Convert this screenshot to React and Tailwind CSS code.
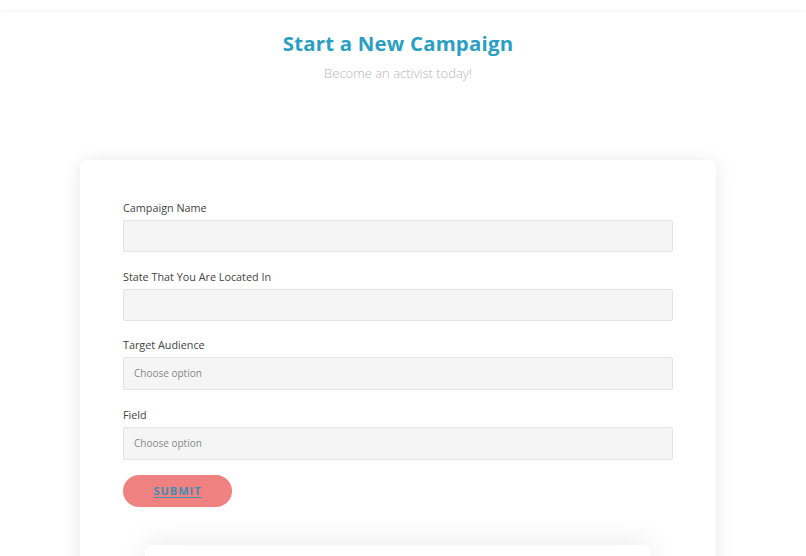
export default function App() {
  const fields = [
    { label: 'Campaign Name', type: 'input' },
    { label: 'State That You Are Located In', type: 'input' },
    { label: 'Target Audience', type: 'select' },
    { label: 'Field', type: 'select' },
  ];

  return (
    <div className="min-h-screen bg-white overflow-hidden pr-[10px] font-['Open_Sans',sans-serif]">
      {/* Top bar */}
      <div className="-mr-[10px] h-[10px] bg-white shadow-[0_1px_4px_rgba(0,0,0,0.05)]" />

      {/* Heading */}
      <div className="text-center pt-[20px]">
        <h1 className="text-[20.4px] font-bold text-[#2a9fc3] tracking-[0.2px] leading-[26px]">
          Start a New Campaign
        </h1>
        <p className="mt-[8px] text-[13px] font-light text-[#b5b5b5] leading-[18px]">
          Become an activist today!
        </p>
      </div>

      {/* Card */}
      <div className="mx-auto mt-[78px] w-[636px] rounded-md bg-white shadow-[0_2px_18px_rgba(0,0,0,0.1)] px-[43px] pt-[40px] pb-10">
        <form className="flex flex-col gap-[16.6px]">
          {fields.map((f) => (
            <div key={f.label} className="flex flex-col gap-[4px]">
              <label className="text-[10.8px] text-[#444] leading-[16px]">{f.label}</label>
              {f.type === 'input' ? (
                <input className="h-[32px] w-full rounded-[2px] border border-[#e4e4e4] bg-[#f5f5f5] px-3 text-[11px] outline-none" />
              ) : (
                <div className="flex h-[33px] w-full items-center rounded-[2px] border border-[#e4e4e4] bg-[#f5f5f5] px-[10px] text-[10px] text-[#888]">
                  Choose option
                </div>
              )}
            </div>
          ))}
          <div className="-mt-[1px]">
            <button
              type="button"
              className="h-[32px] w-[109px] rounded-full bg-[#f08181] text-[11px] font-bold tracking-[1px] text-[#3d8fb3] underline underline-offset-2"
            >
              SUBMIT
            </button>
          </div>
        </form>
        <div className="mx-[22px] mt-[38px] h-40 rounded-lg bg-white shadow-[0_-4px_28px_rgba(0,0,0,0.08)]" />
      </div>
    </div>
  );
}
